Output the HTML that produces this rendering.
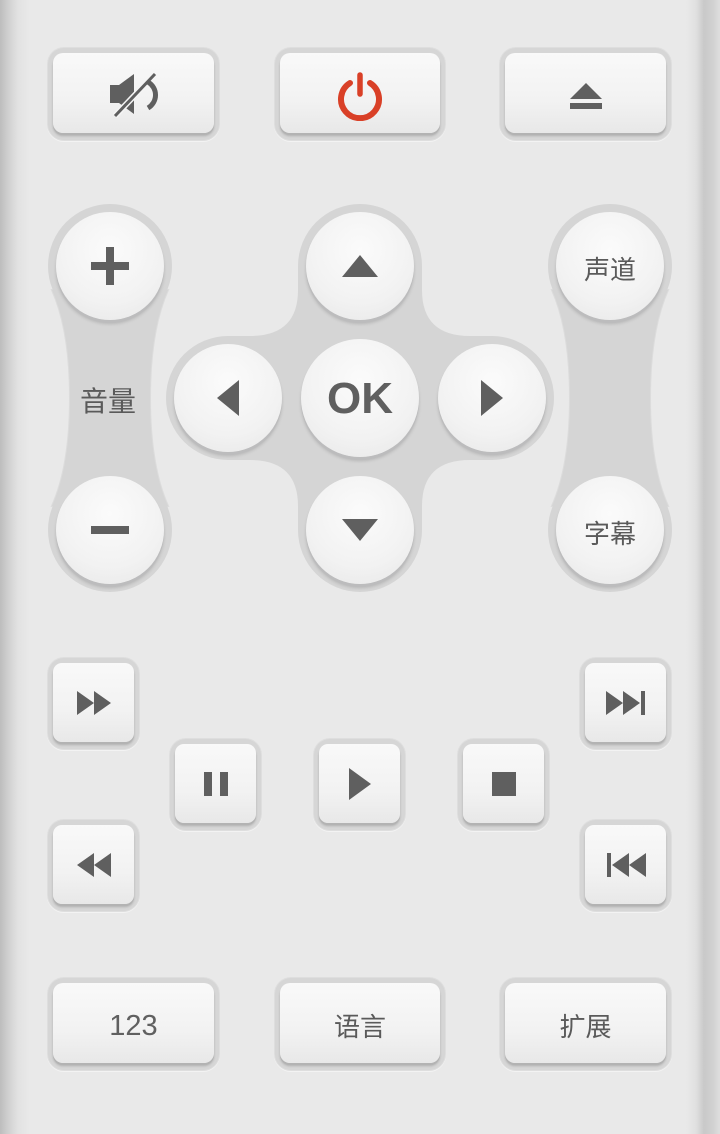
<!DOCTYPE html>
<html><head><meta charset="utf-8"><style>
html,body{margin:0;padding:0}
body{width:720px;height:1134px;position:relative;overflow:hidden;background:#e9e9e9;font-family:"Liberation Sans","Noto Sans CJK SC",sans-serif;color:#606060}
.edgeL{position:absolute;left:0;top:0;width:30px;height:1134px;background:linear-gradient(90deg,#bdbdbd 0,#cfcfcf 8px,#e2e2e2 18px,#e9e9e9 30px)}
.edgeR{position:absolute;right:0;top:0;width:34px;height:1134px;background:linear-gradient(90deg,#e9e9e9 0,#e0e0e0 10px,#c9c9c9 18px,#d0d0d0 26px,#dedede 34px)}
.well{position:absolute;background:#d6d6d6;border-radius:16px;box-shadow:0 0 0 1px #dedede,0 1px 0 1px #f3f3f3}
.btn{position:absolute;left:5px;top:5px;right:5px;bottom:7px;border-radius:10px;background:linear-gradient(#f9f9f9,#f2f2f2 60%,#e8e8e8);box-shadow:0 2px 0 #b3b3b3,0 3px 2px rgba(0,0,0,.18);display:flex;align-items:center;justify-content:center}
.sq .btn{border-radius:9px}
.circ{position:absolute;width:108px;height:108px;border-radius:50%;background:radial-gradient(circle at 50% 35%,#fbfbfb,#f2f2f2 60%,#e6e6e6);box-shadow:0 3px 0 #bcbcbd,0 4px 3px rgba(0,0,0,.15);display:flex;align-items:center;justify-content:center}
.t{font-size:29px;color:#606060;position:relative;top:3px}
.cj{font-size:26px;color:#5a5a5a;position:relative;top:2px}
svg.ic{display:block}
</style></head><body>
<div class="edgeL"></div><div class="edgeR"></div>

<div class="well" style="left:48px;top:48px;width:171px;height:92px"><div class="btn">
<svg class="ic" width="52" height="46" viewBox="0 0 52 46" style="position:relative;top:2px"><path d="M2 13h9l15-11v40l-15-11H2z" fill="#5f5f5f"/><line x1="7" y1="44" x2="47" y2="2" stroke="#f5f5f5" stroke-width="6"/><line x1="7" y1="44" x2="47" y2="2" stroke="#5f5f5f" stroke-width="3"/><path d="M40 10 A15 15 0 0 1 40 36" fill="none" stroke="#5f5f5f" stroke-width="5"/></svg>
</div></div>
<div class="well" style="left:275px;top:48px;width:170px;height:92px"><div class="btn">
<svg class="ic" width="50" height="50" viewBox="0 0 50 50" style="position:relative;top:3px"><path d="M15 12 A19 19 0 1 0 35 12" fill="none" stroke="#d94027" stroke-width="6" stroke-linecap="round"/><line x1="25" y1="4" x2="25" y2="23" stroke="#d94027" stroke-width="5.5" stroke-linecap="round"/></svg>
</div></div>
<div class="well" style="left:500px;top:48px;width:171px;height:92px"><div class="btn">
<svg class="ic" width="36" height="30" viewBox="0 0 36 30" style="position:relative;top:3px"><path d="M18 2L34 18H2z" fill="#5f5f5f"/><rect x="2" y="22" width="32" height="6" fill="#5f5f5f"/></svg>
</div></div>

<svg style="position:absolute;left:0;top:0" width="720" height="1134">
<g fill="#d5d5d5" stroke="#dcdcdc" stroke-width="2">
<path d="M52 290 Q70 330 70 398 Q70 466 52 506 L168 506 Q150 466 150 398 Q150 330 168 290 Z"/>
<path d="M552 290 Q570 330 570 398 Q570 466 552 506 L668 506 Q650 466 650 398 Q650 330 668 290 Z"/>
</g>
<g fill="#d5d5d5">
<circle cx="110" cy="266" r="62"/><circle cx="110" cy="530" r="62"/>
<circle cx="610" cy="266" r="62"/><circle cx="610" cy="530" r="62"/>
<path d="M52 290 Q70 330 70 398 Q70 466 52 506 L168 506 Q150 466 150 398 Q150 330 168 290 Z"/>
<path d="M552 290 Q570 330 570 398 Q570 466 552 506 L668 506 Q650 466 650 398 Q650 330 668 290 Z"/>
<circle cx="360" cy="266" r="62"/><circle cx="360" cy="530" r="62"/>
<circle cx="228" cy="398" r="62"/><circle cx="492" cy="398" r="62"/>
<rect x="298" y="266" width="124" height="264"/>
<rect x="228" y="336" width="264" height="124"/>
<path d="M298 290 Q298 336 250 336 L298 336Z M422 290 Q422 336 470 336 L422 336Z M298 506 Q298 460 250 460 L298 460Z M422 506 Q422 460 470 460 L422 460Z"/>
</g>
</svg>

<div class="circ" style="left:56px;top:212px"><svg width="40" height="40" viewBox="0 0 40 40"><rect x="16" y="1" width="8" height="38" fill="#5f5f5f"/><rect x="1" y="16" width="38" height="8" fill="#5f5f5f"/></svg></div>
<div class="circ" style="left:56px;top:476px"><svg width="40" height="10"><rect x="1" y="1" width="38" height="8" fill="#5f5f5f"/></svg></div>
<div class="cj" style="position:absolute;left:80px;top:380px;font-size:28px">音量</div>

<div class="circ" style="left:556px;top:212px"><span class="cj">声道</span></div>
<div class="circ" style="left:556px;top:476px"><span class="cj">字幕</span></div>

<div class="circ" style="left:306px;top:212px"><svg width="38" height="24"><path d="M19 1L37 23H1z" fill="#5f5f5f"/></svg></div>
<div class="circ" style="left:306px;top:476px"><svg width="38" height="24"><path d="M1 1H37L19 23z" fill="#5f5f5f"/></svg></div>
<div class="circ" style="left:174px;top:344px"><svg width="24" height="38"><path d="M23 1V37L1 19z" fill="#5f5f5f"/></svg></div>
<div class="circ" style="left:438px;top:344px"><svg width="24" height="38"><path d="M1 1V37L23 19z" fill="#5f5f5f"/></svg></div>
<div class="circ" style="left:301px;top:339px;width:118px;height:118px"><span style="font-size:44px;font-weight:bold;color:#5f5f5f;font-family:'Liberation Sans Narrow','Liberation Sans',sans-serif;position:relative;top:1px">OK</span></div>

<div class="well sq" style="left:48px;top:658px;width:91px;height:91px"><div class="btn"><svg width="34" height="24"><path d="M0 0L17 12L0 24z M17 0L34 12L17 24z" fill="#5f5f5f"/></svg></div></div>
<div class="well sq" style="left:48px;top:820px;width:91px;height:91px"><div class="btn"><svg width="34" height="24"><path d="M34 0L17 12L34 24z M17 0L0 12L17 24z" fill="#5f5f5f"/></svg></div></div>
<div class="well sq" style="left:580px;top:658px;width:91px;height:91px"><div class="btn"><svg width="40" height="24"><path d="M0 0L17 12L0 24z M17 0L34 12L17 24z" fill="#5f5f5f"/><rect x="35" y="0" width="4" height="24" fill="#5f5f5f"/></svg></div></div>
<div class="well sq" style="left:580px;top:820px;width:91px;height:91px"><div class="btn"><svg width="40" height="24"><rect x="1" y="0" width="4" height="24" fill="#5f5f5f"/><path d="M40 0L23 12L40 24z M23 0L6 12L23 24z" fill="#5f5f5f"/></svg></div></div>
<div class="well sq" style="left:170px;top:739px;width:91px;height:91px"><div class="btn"><svg width="26" height="24"><rect x="1" y="0" width="8" height="24" fill="#5f5f5f"/><rect x="17" y="0" width="8" height="24" fill="#5f5f5f"/></svg></div></div>
<div class="well sq" style="left:314px;top:739px;width:91px;height:91px"><div class="btn"><svg width="24" height="32"><path d="M1 0V32L23 16z" fill="#5f5f5f"/></svg></div></div>
<div class="well sq" style="left:458px;top:739px;width:91px;height:91px"><div class="btn"><svg width="24" height="24"><rect x="0" y="0" width="24" height="24" fill="#5f5f5f"/></svg></div></div>

<div class="well" style="left:48px;top:978px;width:171px;height:92px"><div class="btn"><span class="t">123</span></div></div>
<div class="well" style="left:275px;top:978px;width:170px;height:92px"><div class="btn"><span class="cj">语言</span></div></div>
<div class="well" style="left:500px;top:978px;width:171px;height:92px"><div class="btn"><span class="cj">扩展</span></div></div>
</body></html>
